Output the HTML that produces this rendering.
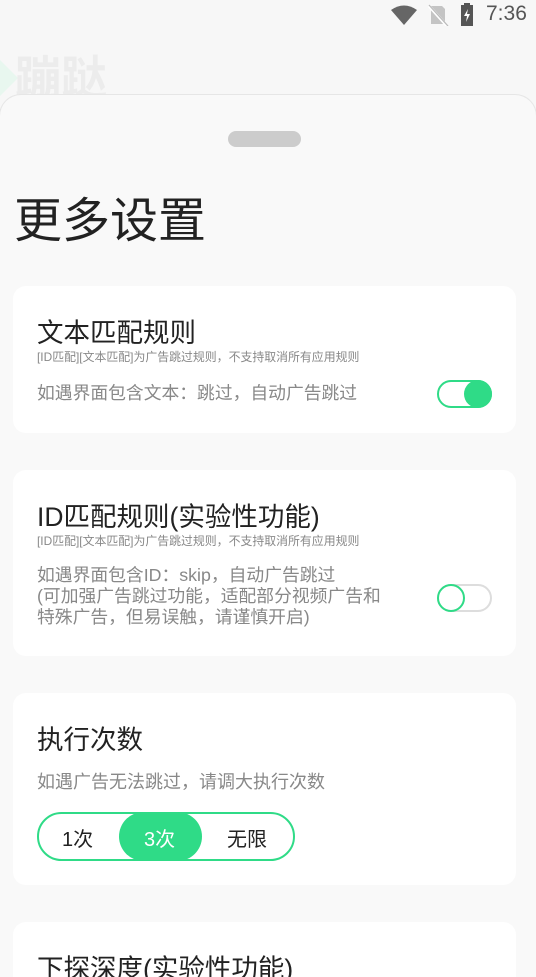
<!DOCTYPE html>
<html><head><meta charset="utf-8"><style>
*{margin:0;padding:0;box-sizing:border-box}
html,body{width:536px;height:977px;overflow:hidden}
body{background:#f7f7f7;font-family:"Liberation Sans","Noto Sans CJK SC",sans-serif;position:relative}
.a{position:absolute;white-space:nowrap}
.sheet{position:absolute;left:-1px;top:94px;width:538px;height:883px;background:#f9f9f9;border:1px solid #e6e6e6;border-bottom:none;border-radius:22px 22px 0 0}
.card{position:absolute;left:13px;width:503px;background:#fff;border-radius:13px}
.t{font-size:26.5px;color:#222;left:24px}
.s{font-size:11.9px;color:#888;left:24px}
.d{font-size:17.8px;color:#888;left:24px;line-height:21px}
.tg{position:absolute;left:424px;width:55px;height:28px;border-radius:14px;border:2px solid #2fdb87;background:#fff}
.kn{position:absolute;top:-2px;width:28px;height:28px;border-radius:50%}
</style></head><body>
<div class="a" style="left:390px;top:4px">
<svg width="28" height="22" viewBox="0 0 28 22"><path d="M1 6 Q14 -3 27 6 L14 21 Z" fill="#666"/></svg></div>
<div class="a" style="left:427px;top:4px"><svg width="22" height="22" viewBox="0 0 22 22"><path d="M4 2 H15 L18 5 V20 H4 Z" fill="#c4c4c4"/><path d="M2 2 L20 22" stroke="#fff" stroke-width="3"/><path d="M2 1 L21 22" stroke="#bbb" stroke-width="1.3"/></svg></div>
<div class="a" style="left:459px;top:3px"><svg width="16" height="24" viewBox="0 0 16 24"><rect x="5" y="0" width="6" height="3" fill="#555"/><rect x="2" y="2" width="12" height="21" fill="#555"/><path d="M9 6 L5 13 H8 L7 19 L11 11 H8 Z" fill="#fff"/></svg></div>
<div class="a" style="left:486px;top:2px;font-size:21px;color:#555">7:36</div>
<div class="a" style="left:0;top:60px;width:0;height:0;border-left:18px solid #e8f7ef;border-top:18px solid transparent;border-bottom:18px solid transparent"></div>
<div class="a" style="left:15px;top:50px;font-size:46px;font-weight:bold;color:#ececec;line-height:56px">蹦跶</div>
<div class="sheet"></div>
<div class="a" style="left:228px;top:131px;width:73px;height:16px;border-radius:8px;background:#cccccc"></div>
<div class="a" style="left:14px;top:181px;font-size:48px;color:#222">更多设置</div>

<div class="card" style="top:286px;height:147px">
<div class="a t" style="top:25px">文本匹配规则</div>
<div class="a s" style="top:62px">[ID匹配][文本匹配]为广告跳过规则，不支持取消所有应用规则</div>
<div class="a d" style="top:97px">如遇界面包含文本：跳过，自动广告跳过</div>
<div class="tg" style="top:94px"><div class="kn" style="left:25px;background:#2fdb87"></div></div>
</div>

<div class="card" style="top:470px;height:186px">
<div class="a t" style="top:25px">ID匹配规则(实验性功能)</div>
<div class="a s" style="top:62px">[ID匹配][文本匹配]为广告跳过规则，不支持取消所有应用规则</div>
<div class="a d" style="top:95px">如遇界面包含ID：skip，自动广告跳过<br>(可加强广告跳过功能，适配部分视频广告和<br>特殊广告，但易误触，请谨慎开启)</div>
<div class="tg" style="top:114px;border-color:#ddd"><div class="kn" style="left:-2px;border:2px solid #2fdb87;background:#fff"></div></div>
</div>

<div class="card" style="top:693px;height:192px">
<div class="a t" style="top:25px">执行次数</div>
<div class="a d" style="top:79px;font-size:18px">如遇广告无法跳过，请调大执行次数</div>
<div class="a" style="left:24px;top:119px;width:258px;height:49px;border:2px solid #2fdb87;border-radius:25px">
<div class="a" style="left:80px;top:-2px;width:83px;height:49px;border-radius:25px;background:#2fdb87"></div>
<div class="a" style="left:23px;top:9px;font-size:20px;color:#222">1次</div>
<div class="a" style="left:105px;top:9px;font-size:20px;color:#fff">3次</div>
<div class="a" style="left:188px;top:9px;font-size:20px;color:#222">无限</div>
</div>
</div>

<div class="card" style="top:922px;height:55px;border-radius:13px 13px 0 0">
<div class="a t" style="top:25px">下探深度(实验性功能)</div>
</div>
</body></html>
